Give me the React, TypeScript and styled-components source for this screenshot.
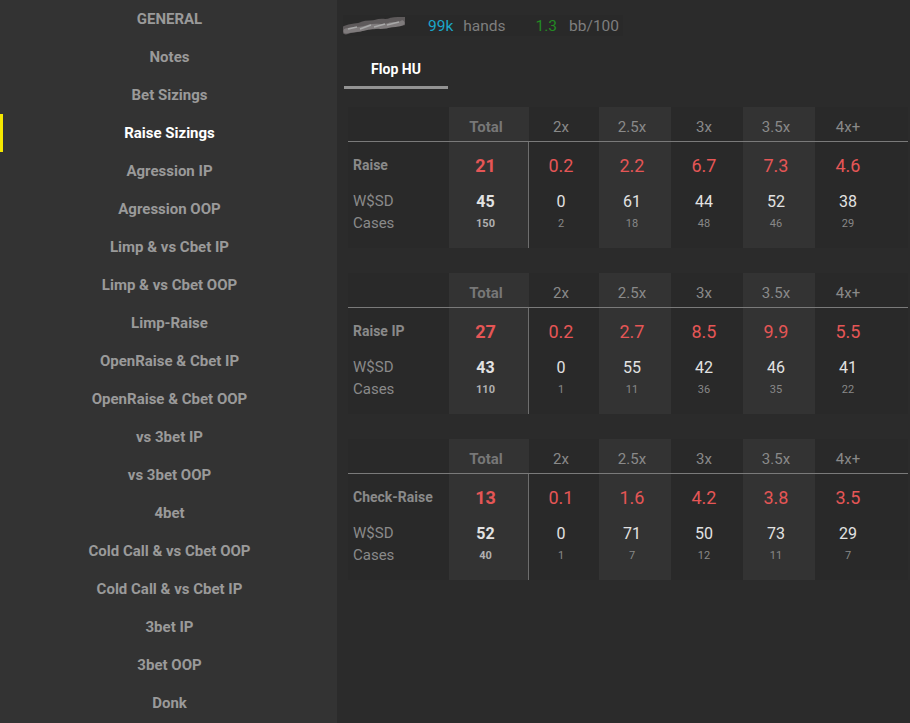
import React from "react";
import styled, { createGlobalStyle } from "styled-components";

const GlobalStyle = createGlobalStyle`
  html, body {
    margin: 0;
    padding: 0;
    background: #2b2b2b;
    font-family: Roboto, "Liberation Sans", Arial, sans-serif;
  }
`;

const Page = styled.div`
  display: flex;
  width: 910px;
  height: 723px;
  overflow: hidden;
`;

const Sidebar = styled.nav`
  width: 337px;
  flex-shrink: 0;
  background: #333333;
  display: flex;
  flex-direction: column;
`;

const NavItem = styled.div<{ $active?: boolean }>`
  height: 38px;
  display: flex;
  align-items: center;
  justify-content: center;
  font-size: 15px;
  font-weight: 700;
  color: ${(p) => (p.$active ? "#ffffff" : "#9a9a9a")};
  border-left: 3px solid ${(p) => (p.$active ? "#f5e800" : "transparent")};
  padding-right: 1px;
`;

const Main = styled.main`
  flex: 1;
  background: #2b2b2b;
  padding: 15px 2px 0 6px;
  display: flex;
  flex-direction: column;
`;

const StatsBar = styled.div`
  display: flex;
  align-items: center;
  height: 21px;
  width: 280px;
  background: #292929;
  font-size: 15.5px;
`;

const Stat = styled.span<{ $color: string; $gap?: number }>`
  color: ${(p) => p.$color};
  margin-left: ${(p) => p.$gap ?? 0}px;
`;

const Tabs = styled.div`
  display: flex;
  margin-top: 19px;
  margin-left: 1px;
`;

const Tab = styled.div`
  width: 104px;
  height: 34px;
  display: flex;
  align-items: center;
  justify-content: center;
  font-size: 14px;
  font-weight: 700;
  color: #ffffff;
  border-bottom: 3px solid #939393;
  box-sizing: border-box;
  padding-bottom: 3px;
`;

const Tables = styled.div`
  display: flex;
  flex-direction: column;
  gap: 25px;
  margin-top: 18px;
  margin-left: 5px;
`;

const Panel = styled.div`
  display: grid;
  grid-template-columns: 101px 80px 70px 72px 72px 72px 72px 1fr;
  grid-template-rows: 35px 46px 26px 18px 16px;
  background: #292929;
  width: 560px;
`;

const HeadCell = styled.div<{ $bold?: boolean; $shade?: boolean }>`
  display: flex;
  align-items: center;
  justify-content: center;
  padding-right: 6px;
  padding-top: 6px;
  font-size: 15px;
  font-weight: ${(p) => (p.$bold ? 700 : 400)};
  color: ${(p) => (p.$bold ? "#777777" : "#8a8a8a")};
  background: ${(p) => (p.$shade ? "#333333" : "transparent")};
  border-bottom: 1px solid #7a7a7a;
`;

const Cell = styled.div<{
  $shade?: boolean;
  $divider?: boolean;
  $kind: "label" | "pct" | "wsd" | "cases" | "rowlabel" | "blank";
  $bold?: boolean;
}>`
  display: flex;
  align-items: center;
  justify-content: ${(p) =>
    p.$kind === "label" || p.$kind === "rowlabel" ? "flex-start" : "center"};
  padding-left: ${(p) => (p.$kind === "label" || p.$kind === "rowlabel" ? "5px" : "0")};
  padding-right: ${(p) => (p.$kind === "label" || p.$kind === "rowlabel" ? "0" : "6px")};
  background: ${(p) => (p.$shade ? "#333333" : "transparent")};
  border-right: ${(p) => (p.$divider ? "1px solid #6e6e6e" : "none")};
  white-space: nowrap;
  font-weight: ${(p) => (p.$bold || p.$kind === "label" ? 700 : 400)};
  font-size: ${(p) =>
    p.$kind === "pct"
      ? "18px"
      : p.$kind === "wsd"
      ? "16px"
      : p.$kind === "cases"
      ? "11px"
      : p.$kind === "label"
      ? "14px"
      : "15px"};
  color: ${(p) =>
    p.$kind === "pct"
      ? "#e55656"
      : p.$kind === "wsd"
      ? "#e2e2e2"
      : p.$kind === "cases"
      ? p.$bold
        ? "#b0b0b0"
        : "#888888"
      : "#8a8a8a"};
`;

const navItems = [
  "GENERAL",
  "Notes",
  "Bet Sizings",
  "Raise Sizings",
  "Agression IP",
  "Agression OOP",
  "Limp & vs Cbet IP",
  "Limp & vs Cbet OOP",
  "Limp-Raise",
  "OpenRaise & Cbet IP",
  "OpenRaise & Cbet OOP",
  "vs 3bet IP",
  "vs 3bet OOP",
  "4bet",
  "Cold Call & vs Cbet OOP",
  "Cold Call & vs Cbet IP",
  "3bet IP",
  "3bet OOP",
  "Donk",
];

const headers = ["Total", "2x", "2.5x", "3x", "3.5x", "4x+"];

type TableData = {
  name: string;
  pct: string[];
  wsd: string[];
  cases: string[];
};

const tables: TableData[] = [
  {
    name: "Raise",
    pct: ["21", "0.2", "2.2", "6.7", "7.3", "4.6"],
    wsd: ["45", "0", "61", "44", "52", "38"],
    cases: ["150", "2", "18", "48", "46", "29"],
  },
  {
    name: "Raise IP",
    pct: ["27", "0.2", "2.7", "8.5", "9.9", "5.5"],
    wsd: ["43", "0", "55", "42", "46", "41"],
    cases: ["110", "1", "11", "36", "35", "22"],
  },
  {
    name: "Check-Raise",
    pct: ["13", "0.1", "1.6", "4.2", "3.8", "3.5"],
    wsd: ["52", "0", "71", "50", "73", "29"],
    cases: ["40", "1", "7", "12", "11", "7"],
  },
];

const shaded = (i: number) => i % 2 === 0;

// blurred-out player name
const Scribble = () => (
  <svg width="62" height="18" viewBox="0 0 62 18" style={{ marginRight: 23, marginLeft: 0 }}>
    <path
      d="M3 13 C9 10 14 12 20 9 C25 7 29 9 34 7 C39 5 43 8 49 5 C53 4 57 5 60 4"
      stroke="#5e5a5b"
      strokeWidth="9"
      fill="none"
      strokeLinecap="round"
    />
    <path
      d="M3 14 C10 12 18 13 26 10 C33 8 40 11 47 8 C52 7 56 8 59 6"
      stroke="#7f7b7c"
      strokeWidth="5"
      fill="none"
      strokeLinecap="round"
    />
    <path
      d="M5 12 L14 10 M17 12 L28 8 M31 10 L42 7 M44 8 L56 5"
      stroke="#a8a8a8"
      strokeWidth="1.5"
      fill="none"
    />
  </svg>
);

const StatsTable = ({ data }: { data: TableData }) => (
  <Panel>
    <HeadCell />
    {headers.map((h, i) => (
      <HeadCell key={h} $bold={i === 0} $shade={shaded(i)}>
        {h}
      </HeadCell>
    ))}
    <HeadCell />

    <Cell $kind="label">{data.name}</Cell>
    {data.pct.map((v, i) => (
      <Cell key={i} $kind="pct" $bold={i === 0} $shade={shaded(i)} $divider={i === 0}>
        {v}
      </Cell>
    ))}
    <Cell $kind="blank" />

    <Cell $kind="rowlabel">W$SD</Cell>
    {data.wsd.map((v, i) => (
      <Cell key={i} $kind="wsd" $bold={i === 0} $shade={shaded(i)} $divider={i === 0}>
        {v}
      </Cell>
    ))}
    <Cell $kind="blank" />

    <Cell $kind="rowlabel">Cases</Cell>
    {data.cases.map((v, i) => (
      <Cell key={i} $kind="cases" $bold={i === 0} $shade={shaded(i)} $divider={i === 0}>
        {v}
      </Cell>
    ))}
    <Cell $kind="blank" />

    <Cell $kind="blank" />
    {headers.map((h, i) => (
      <Cell key={h} $kind="blank" $shade={shaded(i)} $divider={i === 0} />
    ))}
    <Cell $kind="blank" />
  </Panel>
);

export default function App() {
  return (
    <>
      <GlobalStyle />
      <Page>
        <Sidebar>
          {navItems.map((n) => (
            <NavItem key={n} $active={n === "Raise Sizings"}>
              {n}
            </NavItem>
          ))}
        </Sidebar>
        <Main>
          <StatsBar>
            <Scribble />
            <Stat $color="#1ba6c8">99k</Stat>
            <Stat $color="#7e7e7e" $gap={10}>
              hands
            </Stat>
            <Stat $color="#238a23" $gap={30}>
              1.3
            </Stat>
            <Stat $color="#7e7e7e" $gap={12}>
              bb/100
            </Stat>
          </StatsBar>
          <Tabs>
            <Tab>Flop HU</Tab>
          </Tabs>
          <Tables>
            {tables.map((t) => (
              <StatsTable key={t.name} data={t} />
            ))}
          </Tables>
        </Main>
      </Page>
    </>
  );
}
